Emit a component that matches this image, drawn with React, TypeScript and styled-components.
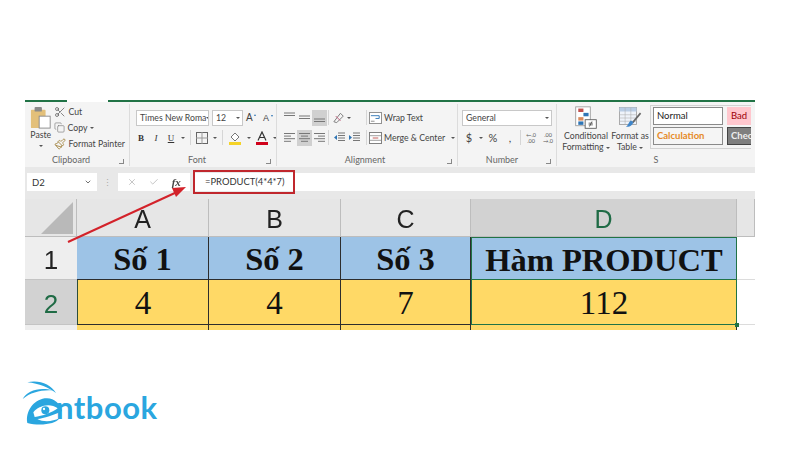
import { FC, ReactNode } from 'react';
import styled, { createGlobalStyle } from 'styled-components';
import { Scissors, Copy, Paintbrush, ChevronDown, X, Check } from 'lucide-react';

const GlobalStyle = createGlobalStyle`
  html, body {
    margin: 0;
    padding: 0;
    background: #fff;
  }
  body {
    font-family: Lato, "Noto Sans", sans-serif;
    overflow: hidden;
  }
`;

const Page = styled.div`
  width: 800px;
  height: 450px;
  padding: 100px 0 0 25px;
  box-sizing: border-box;
`;

const Shot = styled.div`
  position: relative;
  width: 730px;
  height: 230px;
  overflow: hidden;
  filter: blur(0.35px);
`;

const TopLine = styled.div`
  height: 2px;
  background: linear-gradient(to right, #217346 42px, #fff 42px, #fff 83px, #217346 83px);
`;

const Ribbon = styled.div`
  display: flex;
  height: 65px;
  background: #f4f4f4;
  color: #444;
  font-size: 8.7px;
`;

const Group = styled.div<{ $w: number; $last?: boolean }>`
  width: ${(p) => p.$w}px;
  flex: none;
  display: flex;
  flex-direction: column;
  box-sizing: border-box;
  border-right: ${(p) => (p.$last ? 'none' : '1px solid #dcdcdc')};
  margin: 2px 0 1px;
  padding: 0 4px;
  overflow: hidden;
`;

const GroupBody = styled.div`
  flex: 1;
  display: flex;
  min-height: 0;
`;

const GroupLabel = styled.div<{ $pr?: number }>`
  position: relative;
  height: 12px;
  line-height: 12px;
  text-align: center;
  color: #666;
  font-size: 9px;
  padding-right: ${(p) => p.$pr ?? 0}px;
`;

const Launcher = styled.span`
  position: absolute;
  right: 1px;
  bottom: 2px;
  width: 4px;
  height: 4px;
  border-left: 1px solid #888;
  border-bottom: 1px solid #888;
  transform: scaleX(-1);
`;

const PasteCol = styled.div`
  width: 30px;
  display: flex;
  flex-direction: column;
  align-items: center;
  line-height: 11px;
  margin-top: 3px;
`;

const PasteCaret = styled.span`
  display: block;
  margin-top: 5px;
  width: 0;
  height: 0;
  border-left: 2px solid transparent;
  border-right: 2px solid transparent;
  border-top: 2px solid #555;
`;

const ClipCol = styled.div`
  display: flex;
  flex-direction: column;
  gap: 3px;
  margin: 1px 0 0 1px;
`;

const ClipRow = styled.div`
  display: flex;
  align-items: center;
  gap: 3px;
  height: 13px;
  white-space: nowrap;
`;

const Stack = styled.div<{ $gap?: number; $left?: number }>`
  display: flex;
  flex-direction: column;
  gap: ${(p) => p.$gap ?? 6}px;
  padding: 5px 0 0 ${(p) => p.$left ?? 0}px;
`;

const Row = styled.div<{ $gap?: number }>`
  display: flex;
  align-items: center;
  gap: ${(p) => p.$gap ?? 4}px;
  height: 17px;
`;

const Select = styled.div<{ $w: number }>`
  width: ${(p) => p.$w}px;
  height: 16px;
  box-sizing: border-box;
  border: 1px solid #c8c8c8;
  background: #fff;
  display: flex;
  align-items: center;
  justify-content: space-between;
  padding: 0 2px 0 3px;
  font-size: 8.7px;
  white-space: nowrap;
  overflow: hidden;
`;

const Caret = styled.span`
  display: inline-block;
  flex: none;
  width: 0;
  height: 0;
  vertical-align: middle;
  border-left: 2px solid transparent;
  border-right: 2px solid transparent;
  border-top: 2px solid #555;
`;

const FontBtn = styled.span<{ $bold?: boolean; $italic?: boolean; $under?: boolean }>`
  font-family: "Liberation Serif", serif;
  font-size: 9px;
  width: 10px;
  text-align: center;
  font-weight: ${(p) => (p.$bold ? 700 : 400)};
  font-style: ${(p) => (p.$italic ? 'italic' : 'normal')};
  text-decoration: ${(p) => (p.$under ? 'underline' : 'none')};
  color: #333;
`;

const SizeA = styled.span<{ $small?: boolean }>`
  position: relative;
  font-family: "Liberation Sans", sans-serif;
  font-size: ${(p) => (p.$small ? 9 : 10)}px;
  width: 14px;
  color: #444;

  &::after {
    content: '';
    position: absolute;
    left: 8px;
    top: 2px;
    width: 0;
    height: 0;
    border-left: 1.5px solid transparent;
    border-right: 1.5px solid transparent;
    border-${(p) => (p.$small ? 'top' : 'bottom')}: 2px solid #2f75b5;
  }
`;

const Sep = styled.span`
  width: 1px;
  height: 15px;
  background: #d6d6d6;
  flex: none;
`;

const Spacer = styled.span<{ $w: number }>`
  width: ${(p) => p.$w}px;
  flex: none;
`;

const IconCell = styled.span<{ $on?: boolean }>`
  width: 15px;
  height: 16px;
  display: flex;
  align-items: center;
  justify-content: center;
  background: ${(p) => (p.$on ? '#d0d0d0' : 'transparent')};
  flex: none;
`;

const WideText = styled.span`
  margin-left: 2px;
  white-space: nowrap;
`;

const NumSymbol = styled.span`
  font-size: 11px;
  width: 14px;
  text-align: center;
  color: #444;
`;

const Decimal = styled.span`
  display: flex;
  flex-direction: column;
  width: 14px;
  font-size: 5.5px;
  line-height: 6px;
  text-align: center;
  color: #555;
`;

const BigBtn = styled.div<{ $w: number }>`
  width: ${(p) => p.$w}px;
  flex: none;
  display: flex;
  flex-direction: column;
  align-items: center;
  text-align: center;
  line-height: 11px;
  padding-top: 2px;
  white-space: nowrap;
`;

const StyleGrid = styled.div`
  display: grid;
  grid-template-columns: 70px 40px;
  grid-auto-rows: 18px;
  gap: 2px 4px;
  margin: 1px 0 0 1px;
  padding: 1px 0 1px 2px;
  border: 1px solid #d2d2d2;
  border-right: none;
  overflow: hidden;
  width: 104px;
  height: 40px;
`;

const StyleCell = styled.div<{ $bg: string; $fg: string; $bd: string; $bold?: boolean }>`
  background: ${(p) => p.$bg};
  color: ${(p) => p.$fg};
  border: 1.5px solid ${(p) => p.$bd};
  box-sizing: border-box;
  font-size: 9.5px;
  font-weight: ${(p) => (p.$bold ? 700 : 400)};
  line-height: 15px;
  padding-left: 3px;
  white-space: nowrap;
  overflow: hidden;
`;

const FormulaBar = styled.div`
  display: flex;
  align-items: center;
  height: 32px;
  background: #e8e8e8;
  padding-bottom: 2px;
  box-sizing: border-box;
`;

const NameBox = styled.div`
  width: 70px;
  height: 18px;
  margin-left: 2px;
  box-sizing: border-box;
  background: #fff;
  font-size: 9.5px;
  color: #333;
  display: flex;
  align-items: center;
  justify-content: space-between;
  padding: 0 5px;
`;

const Dots = styled.span`
  width: 21px;
  text-align: center;
  color: #aaa;
  font-size: 9px;
`;

const FxBox = styled.div`
  width: 72px;
  height: 18px;
  box-sizing: border-box;
  background: #fff;
  display: flex;
  align-items: center;
  justify-content: space-around;
  padding: 0 3px;
`;

const Fx = styled.span`
  font-family: "Liberation Serif", serif;
  font-style: italic;
  font-weight: 700;
  font-size: 11px;
  color: #444;
`;

const FormulaInput = styled.div`
  flex: 1;
  height: 18px;
  background: #fff;
  margin-left: 3px;
  position: relative;
  font-size: 9.4px;
  line-height: 18px;
  color: #333;
  padding-left: 12px;
`;

const RedBox = styled.div`
  position: absolute;
  left: 0;
  top: -3px;
  width: 102px;
  height: 24px;
  box-sizing: border-box;
  border: 2.5px solid #c0272d;
`;

const Sheet = styled.div`
  display: grid;
  grid-template-columns: 52px 132px 132px 130px 266px 18px;
  grid-template-rows: 38px 43px 45px 5px;
`;

const ColHead = styled.div<{ $active?: boolean }>`
  background: ${(p) => (p.$active ? '#d2d2d2' : '#e6e6e6')};
  color: ${(p) => (p.$active ? '#1f6b45' : '#222')};
  border-right: 1px solid #bdbdbd;
  border-bottom: 1px solid #bdbdbd;
  box-sizing: border-box;
  font-family: "Liberation Sans", sans-serif;
  font-size: 25px;
  display: flex;
  align-items: flex-end;
  justify-content: center;
  padding-bottom: 2px;
`;

const Corner = styled(ColHead)`
  align-items: center;
  justify-content: flex-end;
  padding: 0 2px 0 0;
`;

const RowHead = styled.div<{ $active?: boolean }>`
  background: ${(p) => (p.$active ? '#d2d2d2' : '#eeeeee')};
  color: ${(p) => (p.$active ? '#1f6b45' : '#222')};
  border-bottom: 1px solid #c4c4c4;
  box-sizing: border-box;
  font-family: "Liberation Sans", sans-serif;
  font-size: 26px;
  display: flex;
  align-items: center;
  justify-content: center;
  padding-top: 5px;
`;

const Cell = styled.div<{ $bg: string; $head?: boolean; $green?: boolean; $top?: boolean; $first?: boolean }>`
  position: relative;
  background: ${(p) => p.$bg};
  box-sizing: border-box;
  border-right: 1px solid ${(p) => (p.$green ? '#217346' : '#2d2d2d')};
  border-left: ${(p) => (p.$green ? '1px solid #217346' : p.$first ? '1px solid #2d4d3a' : 'none')};
  border-bottom: 1.5px solid ${(p) => (p.$green ? '#217346' : '#2d2d2d')};
  border-top: ${(p) => (p.$top ? '1px solid #217346' : 'none')};
  font-family: "Liberation Serif", serif;
  font-size: ${(p) => (p.$head ? 32.5 : 33)}px;
  font-weight: ${(p) => (p.$head ? 700 : 400)};
  color: #111;
  display: flex;
  align-items: center;
  justify-content: center;
  white-space: nowrap;
  padding-top: 3px;
`;

const FillHandle = styled.span`
  position: absolute;
  right: -3px;
  bottom: -3px;
  width: 4px;
  height: 4px;
  background: #217346;
`;

const Blank = styled.div`
  border-bottom: 1px solid #dcdcdc;
`;

const Sliver = styled.div`
  background: #ffd966;
  border-right: 1px solid #2d2d2d;
`;

const ArrowLayer = styled.svg`
  position: absolute;
  left: 0;
  top: 0;
  pointer-events: none;
`;

const LogoRow = styled.div`
  display: flex;
  align-items: flex-end;
  margin: 48px 0 0 -5px;
  height: 50px;
`;

const LogoText = styled.span`
  font-family: Lato, sans-serif;
  font-weight: 700;
  font-size: 31px;
  line-height: 36px;
  letter-spacing: 0.5px;
  color: #2aa6df;
  margin-left: -8px;
  margin-bottom: 3px;
`;

const Lines: FC<{ kind: 'left' | 'center' | 'right' | 'top' | 'mid' | 'bottom' }> = ({ kind }) => {
  const rows =
    kind === 'left'
      ? [[1, 12], [1, 8], [1, 12], [1, 8]]
      : kind === 'center'
        ? [[1, 12], [3, 10], [1, 12], [3, 10]]
        : kind === 'right'
          ? [[1, 12], [5, 12], [1, 12], [5, 12]]
          : [];
  if (rows.length) {
    return (
      <svg width="13" height="11" viewBox="0 0 13 11">
        {rows.map(([a, b], i) => (
          <line key={i} x1={a} x2={b} y1={1.5 + i * 2.6} y2={1.5 + i * 2.6} stroke="#777" />
        ))}
      </svg>
    );
  }
  const start = kind === 'top' ? 1 : kind === 'mid' ? 4 : 7;
  return (
    <svg width="13" height="11" viewBox="0 0 13 11">
      {[0, 1].map((i) => (
        <line key={i} x1="1" x2="12" y1={start + i * 2.5} y2={start + i * 2.5} stroke="#777" />
      ))}
    </svg>
  );
};

const Indent: FC<{ flip?: boolean }> = ({ flip }) => (
  <svg width="13" height="11" viewBox="0 0 13 11">
    {[1, 3.5, 6, 8.5].map((y) => (
      <line key={y} x1="5" x2="12" y1={y} y2={y} stroke="#777" />
    ))}
    <path d={flip ? 'M1 3l3 2.5-3 2.5z' : 'M4 3L1 5.5 4 8z'} fill="#2f75b5" />
  </svg>
);

const PasteIcon = () => (
  <svg width="22" height="22" viewBox="0 0 24 24">
    <rect x="1" y="3" width="16" height="20" rx="1" fill="#e3c07a" />
    <rect x="5" y="0" width="8" height="5" rx="1" fill="#8a8a8a" />
    <rect x="10" y="10" width="12" height="13" fill="#fff" stroke="#8a8a8a" />
  </svg>
);

const WrapIcon = () => (
  <svg width="13" height="12" viewBox="0 0 14 13">
    <rect x="0.5" y="0.5" width="13" height="12" fill="#fff" stroke="#8a8a8a" />
    <path d="M2 4h9v3H7" fill="none" stroke="#2f75b5" />
    <path d="M2 10h4" stroke="#888" />
  </svg>
);

const MergeIcon = () => (
  <svg width="13" height="12" viewBox="0 0 14 13">
    <rect x="0.5" y="0.5" width="13" height="12" fill="#fff" stroke="#777" />
    <path d="M1 4h12M1 9h12" stroke="#999" />
    <path d="M4 6.5h6" stroke="#c0504d" />
  </svg>
);

const OrientIcon = () => (
  <svg width="16" height="13" viewBox="0 0 16 13">
    <path d="M2 11L9 2l3 3-7 7z" fill="none" stroke="#777" />
    <path d="M4 5l5 5" stroke="#c05a7a" />
  </svg>
);

const BordersIcon = () => (
  <svg width="12" height="12" viewBox="0 0 12 12">
    <rect x="0.5" y="0.5" width="11" height="11" fill="none" stroke="#666" />
    <path d="M6 0v12M0 6h12" stroke="#999" />
  </svg>
);

const FillIcon = () => (
  <svg width="14" height="14" viewBox="0 0 14 14">
    <path d="M3 6l4-4 4 4-4 4z" fill="#fff" stroke="#777" />
    <rect x="1" y="11" width="12" height="3" fill="#f5d327" />
  </svg>
);

const ColorA = () => (
  <svg width="12" height="14" viewBox="0 0 12 14">
    <path d="M2 9.5L6 1l4 8.5M3.5 6.5h5" fill="none" stroke="#333" strokeWidth="1.2" />
    <rect x="0" y="11" width="12" height="3" fill="#d0021b" />
  </svg>
);

const CondIcon = () => (
  <svg width="26" height="24" viewBox="0 0 30 28">
    <rect x="3" y="1" width="17" height="22" fill="#fff" stroke="#999" />
    <rect x="6" y="3" width="6" height="4" fill="#c0504d" />
    <rect x="12" y="8" width="6" height="4" fill="#2f75b5" />
    <rect x="6" y="13" width="6" height="4" fill="#d98a5b" />
    <rect x="6" y="18" width="6" height="4" fill="#2f75b5" />
    <rect x="14" y="16" width="13" height="10" fill="#fff" stroke="#555" />
    <path d="M18 20h5M18 22h5M22 18l-3 6" stroke="#333" strokeWidth="0.8" fill="none" />
  </svg>
);

const TableFmtIcon = () => (
  <svg width="26" height="24" viewBox="0 0 32 28">
    <rect x="3" y="1" width="21" height="21" fill="#eef3fa" stroke="#9a9a9a" />
    <rect x="3" y="1" width="21" height="5" fill="#b9cde5" />
    <path d="M3 10h21M3 14h21M3 18h21M10 1v21M17 1v21" stroke="#b0b0b0" strokeWidth="0.7" />
    <path d="M29 8L19 20" stroke="#666" strokeWidth="2" />
    <path d="M20 19c-1 5-5 6-9 6 3-2 3-6 6-8z" fill="#3f85c9" />
  </svg>
);

const LogoMark = () => (
  <svg width="44" height="49" viewBox="30 28 132 147">
    <path d="M52 38C88 30 122 44 138 70 116 54 88 42 52 38Z" fill="#2aa6df" />
    <path d="M38 88C50 64 88 50 128 62 92 60 62 68 38 88Z" fill="#2aa6df" />
    <path
      d="M52 160C46 125 70 92 104 86 130 82 150 100 156 124 135 136 100 146 82 148 100 158 128 156 148 146 138 164 88 170 52 160Z"
      fill="#2aa6df"
    />
    <path d="M70 128C84 108 120 98 143 116 128 128 96 140 74 142Z" fill="#fff" />
    <circle cx="106" cy="122" r="12" fill="#2aa6df" />
    <circle cx="102" cy="118" r="3.5" fill="#fff" />
  </svg>
);

const ClipItem: FC<{ icon: ReactNode; children: ReactNode }> = ({ icon, children }) => (
  <ClipRow>
    {icon}
    {children}
  </ClipRow>
);

export default function App() {
  return (
    <>
      <GlobalStyle />
      <Page>
        <Shot>
          <TopLine />
          <Ribbon>
            <Group $w={105}>
              <GroupBody>
                <PasteCol>
                  <PasteIcon />
                  Paste
                  <PasteCaret />
                </PasteCol>
                <ClipCol>
                  <ClipItem icon={<Scissors size={12} color="#555" strokeWidth={1.4} />}>Cut</ClipItem>
                  <ClipItem icon={<Copy size={11} color="#777" strokeWidth={1.4} />}>
                    Copy <Caret />
                  </ClipItem>
                  <ClipItem icon={<Paintbrush size={12} color="#9a7a30" strokeWidth={1.6} />}>Format Painter</ClipItem>
                </ClipCol>
              </GroupBody>
              <GroupLabel $pr={12}>
                Clipboard
                <Launcher />
              </GroupLabel>
            </Group>

            <Group $w={147}>
              <GroupBody>
                <Stack $gap={3} $left={2}>
                  <Row $gap={3}>
                    <Select $w={73}>
                      <span>Times New Roma</span>
                      <Caret />
                    </Select>
                    <Select $w={31}>
                      <span>12</span>
                      <Caret />
                    </Select>
                    <SizeA>A</SizeA>
                    <SizeA $small>A</SizeA>
                  </Row>
                  <Row $gap={5}>
                    <FontBtn $bold>B</FontBtn>
                    <FontBtn $italic>I</FontBtn>
                    <FontBtn $under>U</FontBtn>
                    <Caret />
                    <Sep />
                    <BordersIcon />
                    <Caret />
                    <Sep />
                    <FillIcon />
                    <Caret />
                    <ColorA />
                    <Caret />
                  </Row>
                </Stack>
              </GroupBody>
              <GroupLabel $pr={12}>
                Font
                <Launcher />
              </GroupLabel>
            </Group>

            <Group $w={181}>
              <GroupBody>
                <Stack $gap={3} $left={1}>
                  <Row $gap={0}>
                    <IconCell><Lines kind="top" /></IconCell>
                    <IconCell><Lines kind="mid" /></IconCell>
                    <IconCell $on><Lines kind="bottom" /></IconCell>
                    <Spacer $w={1} />
                    <Sep />
                    <Spacer $w={3} />
                    <IconCell><OrientIcon /></IconCell>
                    <Caret />
                    <Spacer $w={15} />
                    <Sep />
                    <Spacer $w={2} />
                    <WrapIcon />
                    <WideText>Wrap Text</WideText>
                  </Row>
                  <Row $gap={0}>
                    <IconCell><Lines kind="left" /></IconCell>
                    <IconCell $on><Lines kind="center" /></IconCell>
                    <IconCell><Lines kind="right" /></IconCell>
                    <Spacer $w={1} />
                    <Sep />
                    <Spacer $w={3} />
                    <IconCell><Indent /></IconCell>
                    <IconCell><Indent flip /></IconCell>
                    <Spacer $w={4} />
                    <Sep />
                    <Spacer $w={2} />
                    <MergeIcon />
                    <WideText>Merge &amp; Center</WideText>
                    <IconCell><Caret /></IconCell>
                  </Row>
                </Stack>
              </GroupBody>
              <GroupLabel $pr={4}>
                Alignment
                <Launcher />
              </GroupLabel>
            </Group>

            <Group $w={99}>
              <GroupBody>
                <Stack $gap={3}>
                  <Row>
                    <Select $w={90}>
                      <span>General</span>
                      <Caret />
                    </Select>
                  </Row>
                  <Row $gap={3}>
                    <NumSymbol>$</NumSymbol>
                    <Caret />
                    <NumSymbol>%</NumSymbol>
                    <NumSymbol>,</NumSymbol>
                    <Sep />
                    <Decimal><span>←.0</span><span>.00</span></Decimal>
                    <Decimal><span>.00</span><span>→.0</span></Decimal>
                  </Row>
                </Stack>
              </GroupBody>
              <GroupLabel $pr={10}>
                Number
                <Launcher />
              </GroupLabel>
            </Group>

            <Group $w={198} $last>
              <GroupBody>
                <BigBtn $w={50}>
                  <CondIcon />
                  <span>
                    Conditional
                    <br />
                    Formatting <Caret />
                  </span>
                </BigBtn>
                <BigBtn $w={38}>
                  <TableFmtIcon />
                  <span>
                    Format as
                    <br />
                    Table <Caret />
                  </span>
                </BigBtn>
                <StyleGrid>
                  <StyleCell $bg="#fff" $fg="#222" $bd="#8a8a8a">Normal</StyleCell>
                  <StyleCell $bg="#ffc7ce" $fg="#9c0006" $bd="#ffc7ce">Bad</StyleCell>
                  <StyleCell $bg="#f5f5f5" $fg="#e58a27" $bd="#8a8a8a" $bold>Calculation</StyleCell>
                  <StyleCell $bg="#7f7f7f" $fg="#eee" $bd="#444" $bold>Check</StyleCell>
                </StyleGrid>
              </GroupBody>
              <GroupLabel>S</GroupLabel>
            </Group>
          </Ribbon>

          <FormulaBar>
            <NameBox>
              D2
              <ChevronDown size={8} color="#555" strokeWidth={2.5} />
            </NameBox>
            <Dots>⋮</Dots>
            <FxBox>
              <X size={10} color="#bbb" />
              <Check size={10} color="#bbb" />
              <Fx>fx</Fx>
            </FxBox>
            <FormulaInput>
              =PRODUCT(4*4*7)
              <RedBox />
            </FormulaInput>
          </FormulaBar>

          <Sheet>
            <Corner>
              <svg width="34" height="34" viewBox="0 0 34 34">
                <path d="M33 1v32H1z" fill="#b9b9b9" />
              </svg>
            </Corner>
            <ColHead>A</ColHead>
            <ColHead>B</ColHead>
            <ColHead>C</ColHead>
            <ColHead $active>D</ColHead>
            <ColHead />

            <RowHead>1</RowHead>
            <Cell $bg="#9dc3e6" $head>Số 1</Cell>
            <Cell $bg="#9dc3e6" $head>Số 2</Cell>
            <Cell $bg="#9dc3e6" $head>Số 3</Cell>
            <Cell $bg="#9dc3e6" $head $green $top>Hàm PRODUCT</Cell>
            <Blank />

            <RowHead $active>2</RowHead>
            <Cell $bg="#ffd966" $first>4</Cell>
            <Cell $bg="#ffd966">4</Cell>
            <Cell $bg="#ffd966">7</Cell>
            <Cell $bg="#ffd966" $green>
              112
              <FillHandle />
            </Cell>
            <Blank />

            <RowHead />
            <Sliver />
            <Sliver />
            <Sliver />
            <Sliver />
            <div />
          </Sheet>

          <ArrowLayer width="730" height="230" viewBox="0 0 730 230">
            <line x1="43" y1="142" x2="152" y2="92" stroke="#d3222a" strokeWidth="2" />
            <path d="M161 87l-14 1 4 9z" fill="#d3222a" />
          </ArrowLayer>
        </Shot>

        <LogoRow>
          <LogoMark />
          <LogoText>ntbook</LogoText>
        </LogoRow>
      </Page>
    </>
  );
}
